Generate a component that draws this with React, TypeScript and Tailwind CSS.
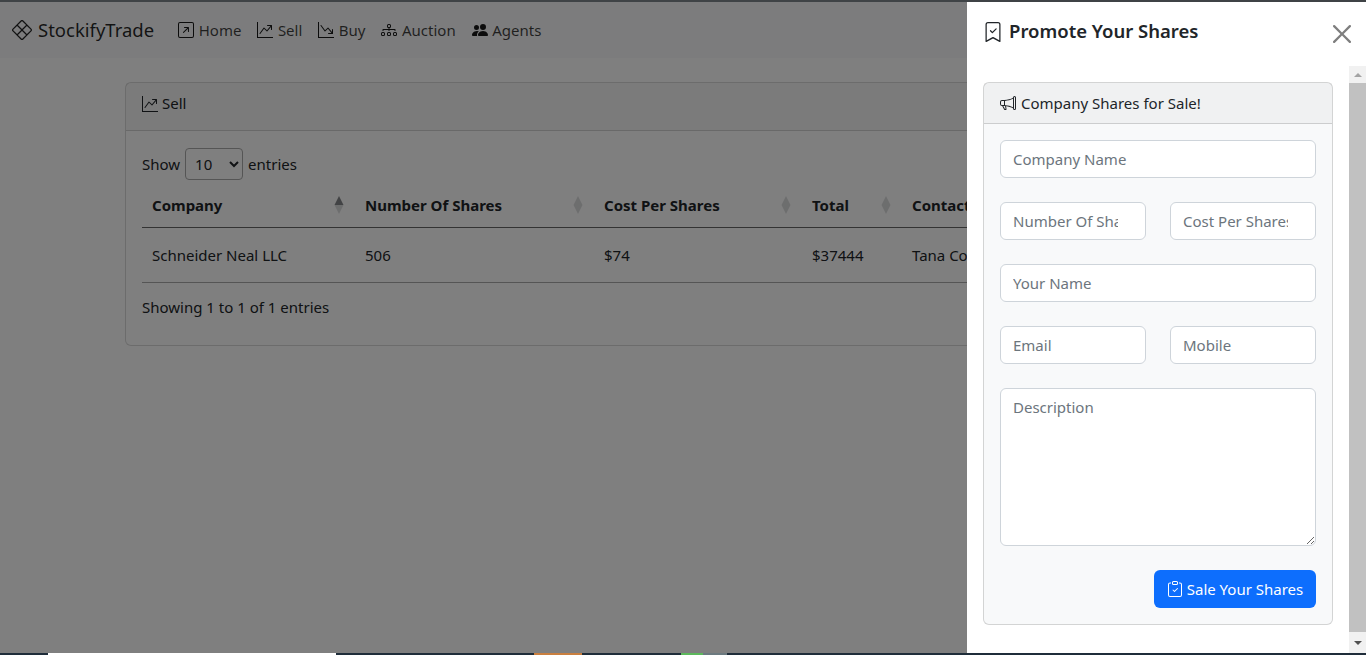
import {
  BsArrowUpRightSquare,
  BsBookmarkCheck,
  BsClipboardCheck,
  BsDiagram3,
  BsGraphDownArrow,
  BsGraphUpArrow,
  BsMegaphone,
  BsPeopleFill,
  BsXDiamond,
} from "react-icons/bs";

const NAV_LINKS = [
  { label: "Home", icon: BsArrowUpRightSquare },
  { label: "Sell", icon: BsGraphUpArrow },
  { label: "Buy", icon: BsGraphDownArrow },
  { label: "Auction", icon: BsDiagram3 },
  { label: "Agents", icon: BsPeopleFill },
];

const COLUMNS = [
  { label: "Company", width: "w-[213px]", active: true },
  { label: "Number Of Shares", width: "w-[239px]", active: false },
  { label: "Cost Per Shares", width: "w-[208px]", active: false },
  { label: "Total", width: "w-[100px]", active: false },
  { label: "Contact", width: "w-[200px]", active: false },
];

const ROW = ["Schneider Neal LLC", "506", "$74", "$37444", "Tana Cotton"];

const inputClass =
  "block w-full h-[38px] min-w-0 rounded-md border border-[#ced4da] bg-white pl-3 pr-3 text-[15px] text-[#212529] placeholder:text-[#6c757d] outline-none";
const narrowInputClass =
  "block w-full h-[38px] min-w-0 rounded-md border border-[#ced4da] bg-white pl-3 pr-[27px] text-[15px] text-[#212529] placeholder:text-[#6c757d] outline-none";

function SortIcon({ active }: { active: boolean }) {
  return (
    <svg width="10" height="18" viewBox="0 0 10 18" className="shrink-0">
      <path d="M5 0 L9.5 9 H0.5 Z" fill="#212529" opacity={active ? 0.55 : 0.16} />
      <path d="M5 18 L9.5 9 H0.5 Z" fill="#212529" opacity="0.16" />
    </svg>
  );
}

function Page() {
  return (
    <div className="h-full bg-white">
      <nav className="h-[56px] bg-[#f8f9fa] flex items-center pl-3 text-[#212529]">
        <div className="flex items-center gap-[6px] text-[18.5px] mr-[24px] text-black/85">
          <BsXDiamond className="w-5 h-5" />
          <span>StockifyTrade</span>
        </div>
        <ul className="flex items-center gap-4 text-black/75">
          {NAV_LINKS.map((link) => (
            <li key={link.label} className="flex items-center gap-[4.5px]">
              <link.icon className="w-4 h-4 text-black/90" />
              <span>{link.label}</span>
            </li>
          ))}
        </ul>
      </nav>

      <div className="w-[1116px] ml-[125px] mt-6 h-[264px] rounded-md border border-black/15 bg-white">
        <div className="h-[48px] flex items-center gap-1 px-4 pb-[6px] border-b border-black/15 bg-black/[0.03]">
          <BsGraphUpArrow className="w-4 h-4" />
          <span>Sell</span>
        </div>
        <div className="px-4 pt-[17px]">
          <div className="flex items-center h-[32px]">
            <span>Show</span>
            <select className="w-[58px] h-[32px] ml-[5px] mr-[5px] pl-[5px] rounded border border-[#aaa] bg-white text-[15px]">
              <option>10</option>
            </select>
            <span>entries</span>
          </div>
          <table className="table-fixed w-[1084px] mt-[5px] border-collapse">
            <thead>
              <tr className="h-[42px] border-b border-[#666]">
                {COLUMNS.map((col) => (
                  <th key={col.label} className={`${col.width} pl-[10px] pr-[11px] pb-[2px] text-left font-bold whitespace-nowrap`}>
                    <div className="flex items-center justify-between">
                      <span>{col.label}</span>
                      <SortIcon active={col.active} />
                    </div>
                  </th>
                ))}
                <th />
              </tr>
            </thead>
            <tbody>
              <tr className="h-[55px] border-b border-[#aaa]">
                {ROW.map((cell) => (
                  <td key={cell} className="pl-[10px] pt-[1px] whitespace-nowrap">
                    {cell}
                  </td>
                ))}
                <td />
              </tr>
            </tbody>
          </table>
          <p className="mt-[13px]">Showing 1 to 1 of 1 entries</p>
        </div>
      </div>
    </div>
  );
}

function FakeScrollbar() {
  return (
    <div className="w-[17px] shrink-0 bg-[#f1f1f1] flex flex-col">
      <div className="h-[17px] flex items-center justify-center">
        <div className="w-0 h-0 border-x-[4px] border-x-transparent border-b-[4px] border-b-[#a3a3a3]" />
      </div>
      <div className="flex-1 bg-[#c1c1c1]" />
      <div className="h-[21px] flex items-center justify-center">
        <div className="w-0 h-0 border-x-[4px] border-x-transparent border-t-[4px] border-t-[#505050]" />
      </div>
    </div>
  );
}

function Offcanvas() {
  return (
    <aside className="absolute top-0 right-0 bottom-0 w-[399px] bg-white flex flex-col text-[#212529]">
      <header className="h-[64px] shrink-0 relative pl-4 flex items-center">
        <h5 className="flex items-center gap-[6px] text-[18.5px] font-semibold leading-none -mt-[5px]">
          <BsBookmarkCheck className="w-5 h-5" />
          Promote Your Shares
        </h5>
        <button className="absolute right-[15px] top-[23px] opacity-50">
          <svg width="18" height="18" viewBox="0 0 16 16" fill="#000">
            <path d="M.293.293a1 1 0 0 1 1.414 0L8 6.586 14.293.293a1 1 0 1 1 1.414 1.414L9.414 8l6.293 6.293a1 1 0 0 1-1.414 1.414L8 9.414l-6.293 6.293a1 1 0 0 1-1.414-1.414L6.586 8 .293 1.707a1 1 0 0 1 0-1.414z" />
          </svg>
        </button>
      </header>
      <div className="flex-1 flex min-h-0">
        <div className="flex-1 min-w-0 pl-4 pr-4 pt-4">
          <div className="h-[543px] rounded-md border border-black/15 bg-[#f8f9fa] flex flex-col">
            <div className="h-[41px] shrink-0 flex items-center gap-[5px] px-4 border-b border-black/15 bg-black/[0.03]">
              <BsMegaphone className="w-4 h-4" />
              <span>Company Shares for Sale!</span>
            </div>
            <form className="flex-1 p-4 flex flex-col gap-6">
              <input className={inputClass} placeholder="Company Name" />
              <div className="grid grid-cols-2 gap-6">
                <input className={narrowInputClass} placeholder="Number Of Shares" />
                <input className={narrowInputClass} placeholder="Cost Per Shares" />
              </div>
              <input className={inputClass} placeholder="Your Name" />
              <div className="grid grid-cols-2 gap-6">
                <input className={narrowInputClass} placeholder="Email" />
                <input className={narrowInputClass} placeholder="Mobile" />
              </div>
              <textarea
                className="block w-full h-[158px] rounded-md border border-[#ced4da] bg-white px-3 py-[7px] text-[15px] placeholder:text-[#6c757d] outline-none"
                placeholder="Description"
              />
              <div className="flex justify-end">
                <button
                  type="button"
                  className="h-[38px] w-[162px] rounded-md bg-[#0d6efd] text-white flex items-center justify-center gap-1"
                >
                  <BsClipboardCheck className="w-4 h-4" />
                  Sale Your Shares
                </button>
              </div>
            </form>
          </div>
        </div>
        <FakeScrollbar />
      </div>
    </aside>
  );
}

export default function App() {
  return (
    <div className="h-[655px] overflow-hidden flex flex-col font-['Noto_Sans','Open_Sans',sans-serif] text-[15px] text-[#212529]">
      <div className="h-[2px] shrink-0 bg-[#3f4346]" />
      <div className="flex-1 relative min-h-0">
        <Page />
        <div className="absolute inset-0 bg-black/50" />
        <Offcanvas />
      </div>
      <div className="h-[2px] shrink-0 bg-[#1f2d3a] flex">
        <div className="w-[48px]" />
        <div className="w-[288px] bg-white" />
        <div className="w-[198px]" />
        <div className="w-[48px] bg-[#c97f3f]" />
        <div className="w-[99px]" />
        <div className="w-[22px] bg-[#5cb85c]" />
        <div className="w-[24px] bg-[#6c7a80]" />
      </div>
    </div>
  );
}
